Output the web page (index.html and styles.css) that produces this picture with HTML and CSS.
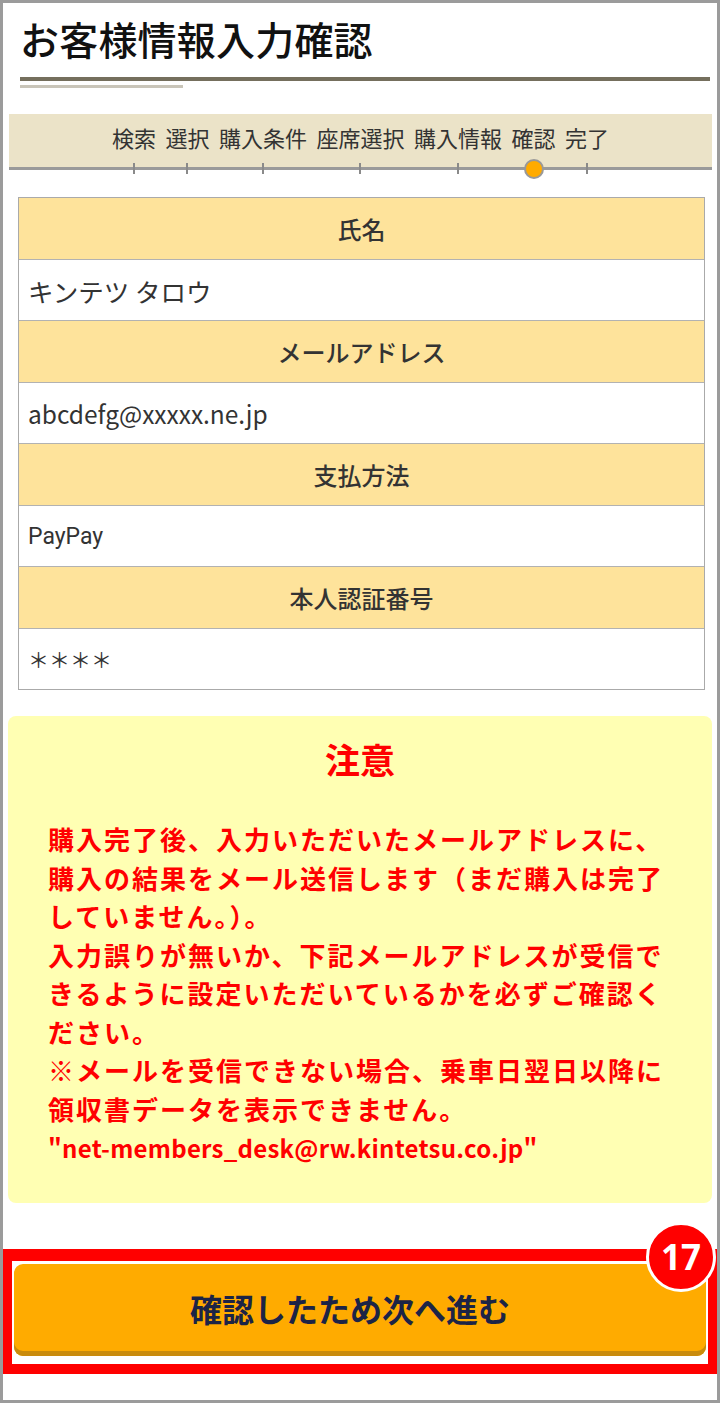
FILE: index.html
```html
<!DOCTYPE html>
<html lang="ja">
<head>
<meta charset="utf-8">
<title>お客様情報入力確認</title>
<link rel="stylesheet" href="styles.css">
</head>
<body>
<div class="frame">
  <h1 class="title">お客様情報入力確認</h1>
  <div class="rule-dark"></div>
  <div class="rule-light"></div>

  <div class="steps">
    <div class="step"><span class="label">検索</span><span class="tick"></span></div>
    <div class="step"><span class="label">選択</span><span class="tick"></span></div>
    <div class="step"><span class="label">購入条件</span><span class="tick"></span></div>
    <div class="step"><span class="label">座席選択</span><span class="tick"></span></div>
    <div class="step"><span class="label">購入情報</span><span class="tick"></span></div>
    <div class="step"><span class="label">確認</span><span class="dot"></span></div>
    <div class="step"><span class="label">完了</span><span class="tick"></span></div>
  </div>

  <div class="info">
    <div class="row head">氏名</div>
    <div class="row value v-name">キンテツ タロウ</div>
    <div class="row head">メールアドレス</div>
    <div class="row value v-mail">abcdefg@xxxxx.ne.jp</div>
    <div class="row head">支払方法</div>
    <div class="row value v-pay">PayPay</div>
    <div class="row head">本人認証番号</div>
    <div class="row value v-pin">＊＊＊＊</div>
  </div>

  <div class="notice">
    <div class="notice-title">注意</div>
    <p class="notice-body">購入完了後、入力いただいたメールアドレスに、<br>購入の結果をメール送信します（まだ購入は完了<br>していません。）。<br>入力誤りが無いか、下記メールアドレスが受信で<br>きるように設定いただいているかを必ずご確認く<br>ださい。<br>※メールを受信できない場合、乗車日翌日以降に<br>領収書データを表示できません。<br><span class="mail">"net-members_desk@rw.kintetsu.co.jp"</span></p>
  </div>

  <div class="highlight">
    <button class="next" type="button">確認したため次へ進む</button>
    <span class="badge">17</span>
  </div>
</div>
</body>
</html>
```

FILE: styles.css
```css
html, body {
  margin: 0;
  padding: 0;
  background: #ffffff;
}

body {
  font-family: "Noto Sans CJK JP", "Noto Sans", sans-serif;
  color: #333333;
}

.frame {
  width: 720px;
  height: 1403px;
  box-sizing: border-box;
  border: 3px solid #9b9b9b;
  background: #ffffff;
  overflow: hidden;
}

.title {
  margin: 0;
  padding: 12px 0 0 17px;
  font-size: 39px;
  line-height: 46px;
  font-weight: 500;
  color: #111111;
  letter-spacing: 0.2px;
}

.rule-dark {
  height: 4px;
  margin: 16px 7px 0 17px;
  background: #756f5d;
}

.rule-light {
  height: 3px;
  width: 163px;
  margin: 4px 0 0 17px;
  background: #c9c5b9;
}

.steps {
  display: flex;
  justify-content: center;
  gap: 9.5px;
  height: 53px;
  margin: 26px 5px 0 6px;
  background: #ebe3c8;
  border-bottom: 3px solid #9a9a9a;
}

.step {
  position: relative;
  display: flex;
  flex-direction: column;
  align-items: center;
}

.label {
  padding-top: 11px;
  font-size: 22px;
  line-height: 24px;
  color: #333333;
  white-space: nowrap;
}

.tick {
  position: absolute;
  left: 50%;
  bottom: -7px;
  width: 2px;
  height: 11px;
  margin-left: -1px;
  background: #8a8a8a;
}

.dot {
  position: absolute;
  left: 50%;
  bottom: -12px;
  width: 16px;
  height: 16px;
  margin-left: -10px;
  border: 2px solid #999999;
  border-radius: 50%;
  background: #ffab00;
}

.info {
  margin: 27px 0 0 15px;
  width: 687px;
  box-sizing: border-box;
  border: 1px solid #aaaaaa;
}

.row {
  display: flex;
  align-items: center;
  box-sizing: border-box;
}

.row + .row {
  border-top: 1px solid #b2b2b2;
}

.head {
  justify-content: center;
  height: 62px;
  background: #fee39b;
  font-size: 24px;
  font-weight: 500;
  color: #333333;
}

.info .head:first-child {
  height: 61px;
}

.value {
  height: 61px;
  padding-left: 9px;
  background: #ffffff;
  color: #333333;
}

.v-name { font-size: 25.5px; }
.v-mail { font-size: 24.5px; }
.v-pay { font-family: Roboto, "Noto Sans", sans-serif; font-size: 23px; }
.v-pin { font-size: 21px; }

.notice {
  margin: 26px 5px 0 5px;
  padding: 18px 0 35px 40px;
  background: #ffffb3;
  border-radius: 8px;
}

.notice-title {
  text-align: center;
  margin-left: -40px;
  font-size: 35px;
  line-height: 50px;
  font-weight: 700;
  color: #ff0000;
}

.notice-body {
  margin: 36px 0 0 0;
  font-size: 26px;
  line-height: 38.5px;
  letter-spacing: 2px;
  font-weight: 700;
  color: #ff0000;
  white-space: nowrap;
}

.notice-body .mail {
  font-size: 24px;
  letter-spacing: 0.25px;
}

.highlight {
  position: relative;
  margin-top: 46px;
  border-style: solid;
  border-color: #ff0000;
  border-width: 12px 9px 10px 9px;
  padding: 3px 2px 8px 2px;
  background: #ffffff;
}

.next {
  display: block;
  width: 100%;
  height: 92px;
  margin: 0;
  padding: 0 20px 4px 0;
  border: none;
  border-radius: 9px;
  background: #ffab00;
  box-shadow: inset 0 -5px 0 #c98b0c;
  font-family: "Noto Sans CJK JP", sans-serif;
  font-size: 32px;
  font-weight: 700;
  color: #1c2446;
  letter-spacing: 0;
}

.badge {
  position: absolute;
  right: -8px;
  top: -39px;
  width: 64px;
  height: 64px;
  border: 3px solid #ffffff;
  border-radius: 50%;
  background: #ff0000;
  color: #ffffff;
  font-family: "Noto Sans", "Roboto", sans-serif;
  font-size: 35px;
  font-weight: 700;
  line-height: 64px;
  text-align: center;
}
```
